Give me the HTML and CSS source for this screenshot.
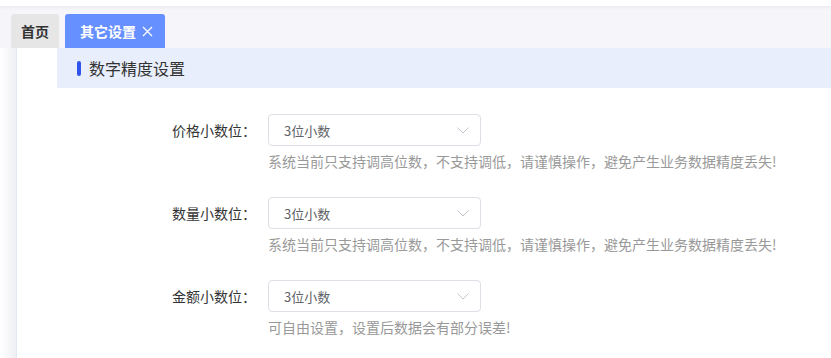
FILE: index.html
```html
<!DOCTYPE html>
<html>
<head>
    <title>其它设置</title>
    <link rel="stylesheet" href="styles.css">
</head>
<body>
    <div class="topbar"></div>
    <div class="tabs">
        <div class="tab">首页</div>
        <div class="tab active">其它设置
            <svg class="close" width="11" height="11" viewBox="0 0 11 11">
                <path d="M1 1L10 10M10 1L1 10" stroke="#fff" stroke-width="1.3" fill="none"/>
            </svg>
        </div>
    </div>
    <div class="main">
        <div class="side"></div>
        <div class="content">
            <div class="section-title"><span class="bar"></span>数字精度设置</div>
            <div class="form">
                <div class="form-row">
                    <label>价格小数位：</label>
                    <div class="field">
                        <div class="select">3位小数
                            <svg class="arrow" width="12" height="7" viewBox="0 0 12 7">
                                <path d="M0.5 0.5L6 6L11.5 0.5" stroke="#c0c4cc" stroke-width="1" fill="none"/>
                            </svg>
                        </div>
                        <div class="hint">系统当前只支持调高位数，不支持调低，请谨慎操作，避免产生业务数据精度丢失!</div>
                    </div>
                </div>
                <div class="form-row">
                    <label>数量小数位：</label>
                    <div class="field">
                        <div class="select">3位小数
                            <svg class="arrow" width="12" height="7" viewBox="0 0 12 7">
                                <path d="M0.5 0.5L6 6L11.5 0.5" stroke="#c0c4cc" stroke-width="1" fill="none"/>
                            </svg>
                        </div>
                        <div class="hint">系统当前只支持调高位数，不支持调低，请谨慎操作，避免产生业务数据精度丢失!</div>
                    </div>
                </div>
                <div class="form-row">
                    <label>金额小数位：</label>
                    <div class="field">
                        <div class="select">3位小数
                            <svg class="arrow" width="12" height="7" viewBox="0 0 12 7">
                                <path d="M0.5 0.5L6 6L11.5 0.5" stroke="#c0c4cc" stroke-width="1" fill="none"/>
                            </svg>
                        </div>
                        <div class="hint">可自由设置，设置后数据会有部分误差!</div>
                    </div>
                </div>
            </div>
        </div>
    </div>
</body>
</html>
```

FILE: styles.css
```css
body {
    margin: 0;
    font-family: "Noto Sans CJK SC", "Noto Sans", sans-serif;
    color: #333;
    background-color: #ffffff;
}
.topbar {
    height: 6px;
    background-color: #ffffff;
    box-shadow: 0 1px 4px rgba(0, 0, 0, 0.06);
    position: relative;
}
.tabs {
    display: flex;
    align-items: flex-end;
    gap: 6px;
    height: 42px;
    padding-left: 11px;
    background-color: #f5f5fa;
}
.tab {
    display: flex;
    align-items: center;
    height: 34px;
    padding: 0 10px;
    font-size: 14px;
    font-weight: bold;
    color: #333;
    background-color: #e6e6e6;
    border-radius: 3px 3px 0 0;
}
.tab.active {
    padding: 0 12px 0 15px;
    color: #ffffff;
    background-color: #6690ff;
}
.close {
    margin-left: 6px;
}
.main {
    display: flex;
    height: 310px;
}
.side {
    width: 16px;
    background: linear-gradient(to right, #ffffff, #eff0f5);
    border-right: 1px solid #e3e9f6;
}
.content {
    flex: 1;
    padding-left: 40px;
}
.section-title {
    display: flex;
    align-items: center;
    height: 40px;
    padding-left: 20px;
    font-size: 16px;
    color: #333;
    background-color: #e8eefb;
}
.bar {
    width: 4px;
    height: 15px;
    margin-right: 8px;
    border-radius: 2px;
    background-color: #2f54eb;
}
.form {
    display: flex;
    flex-direction: column;
    gap: 26px;
    padding-top: 26px;
}
.form-row {
    display: flex;
    align-items: flex-start;
}
.form-row label {
    width: 211px;
    box-sizing: border-box;
    padding-right: 12px;
    text-align: right;
    font-size: 14px;
    line-height: 32px;
    color: #333;
}
.select {
    display: flex;
    align-items: center;
    justify-content: space-between;
    box-sizing: border-box;
    width: 213px;
    height: 32px;
    padding: 0 11px 0 15px;
    font-size: 13px;
    color: #606266;
    border: 1px solid #dcdfe6;
    border-radius: 4px;
}
.hint {
    margin-top: 5px;
    font-size: 14px;
    line-height: 20px;
    color: #999;
}
```
